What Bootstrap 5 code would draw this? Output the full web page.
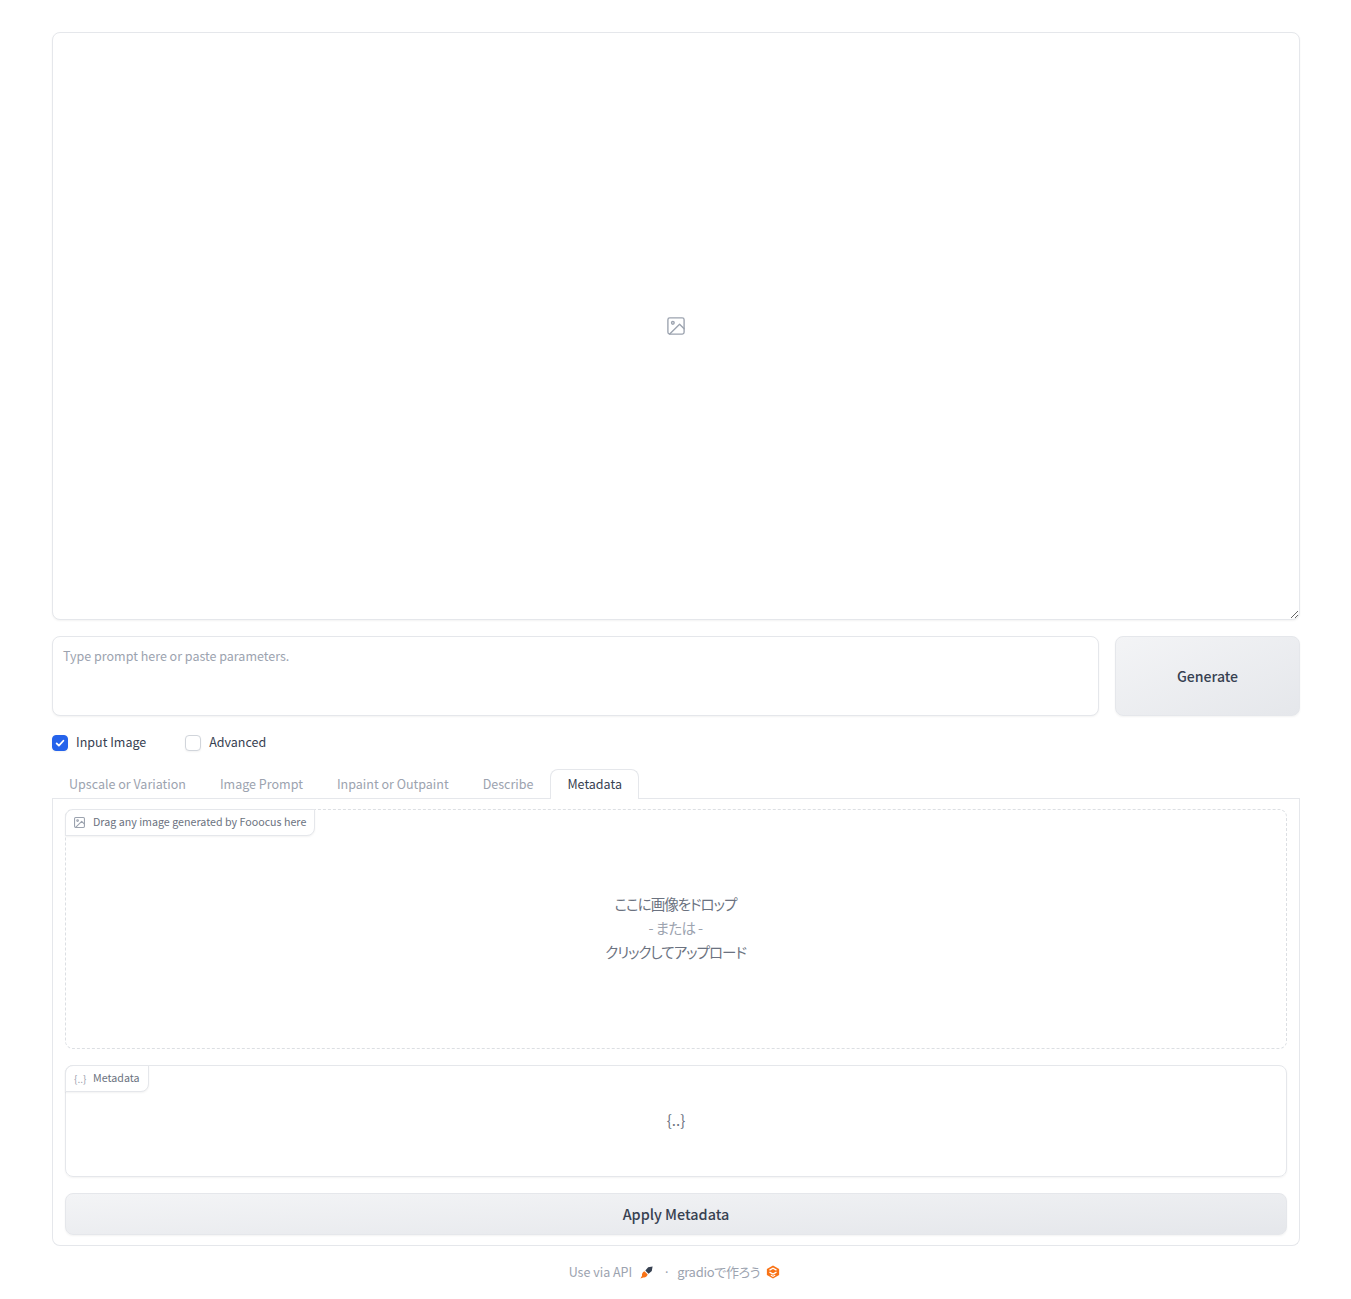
<!doctype html>
<html lang="ja">
<head>
<meta charset="utf-8">
<title>Fooocus</title>
<link href="https://cdn.jsdelivr.net/npm/bootstrap@5.3.0/dist/css/bootstrap.min.css" rel="stylesheet">
<style>
body{font-family:"Noto Sans CJK JP","Noto Sans",sans-serif;color:#374151;background:#fff;font-size:12.5px;line-height:1.5;font-feature-settings:"palt"}
.app-wrap{padding:32px 51px 0 52px}
.block-box{border:1px solid #e5e7eb;border-radius:8px;box-shadow:0 1px 2px rgba(0,0,0,.05);background:#fff}
.gallery-box{height:588px;resize:vertical;overflow:auto;color:#9ca3af}
.prompt-row{margin-top:16px;gap:16px;height:80px}
.prompt-area{padding:8px 10px;color:#9ca3af;line-height:21px}
.gen-btn{width:185px;border:1px solid #e5e7eb;border-radius:8px;background:linear-gradient(to bottom right,#f3f4f6,#e5e7eb);font-weight:500;font-size:14.1px;color:#374151;box-shadow:0 1px 2px rgba(0,0,0,.05);padding:2px 0 0}
.check-row{margin-top:19px;height:16px;gap:39px}
.check-item{gap:8px;line-height:16px;color:#374151}
.check-label{position:relative;top:-1px}
.check-box{width:16px;height:16px;border-radius:4px;border:1px solid #d1d5db;background:#fff;box-shadow:0 1px 2px rgba(0,0,0,.05)}
.check-box.is-on{background:#2563eb;border-color:#2563eb}
.tab-strip{margin-top:18px;height:30px;border-bottom:1px solid #e5e7eb;padding:0;font-size:12.52px}
.tab-item{padding:0 16px;height:30px;line-height:27px;color:#9ca3af;border:1px solid transparent;border-bottom:0;border-radius:8px 8px 0 0}
.tab-item.is-sel{color:#374151;border-color:#e5e7eb;background:#fff}
.tab-body{border:1px solid #e5e7eb;border-top:0;border-radius:0 0 8px 8px;padding:10px 12px;height:447px;gap:16px}
.drop-box{height:240px;padding:0 1px 2px 0;border:1px dashed #dcdfe3;border-radius:8px;position:relative;line-height:24px;font-size:14.5px;color:#6b7280}
.jp-tight{letter-spacing:-1px}
.drop-or{color:#9ca3af;letter-spacing:-.6px}
.json-box{height:112px;padding-bottom:2px;border:1px solid #e5e7eb;border-radius:8px;position:relative;font-size:15px;color:#6b7280;box-shadow:0 1px 2px rgba(0,0,0,.05)}
.corner-label{position:absolute;top:-1px;left:-1px;height:27px;display:flex;align-items:center;gap:8px;padding:0 8px;font-size:10.7px;color:#6b7280;background:#fff;border:1px solid #e5e7eb;border-radius:8px 0 8px 0;box-shadow:0 1px 2px rgba(0,0,0,.05);line-height:1}
.corner-ico{color:#9ca3af}
.corner-label .mini{font-size:10px;color:#9ca3af;width:11px;text-align:center}
.apply-btn{height:42px;border:1px solid #e5e7eb;border-radius:8px;background:linear-gradient(to bottom right,#f3f4f6,#e5e7eb);font-weight:500;font-size:14.4px;color:#374151;box-shadow:0 1px 2px rgba(0,0,0,.05);padding:0;width:100%}
.foot-line{height:53px;gap:8px;padding-right:3px;color:#9ca3af}
.foot-dot{margin:0 -1px 0 2px}
.foot-name{font-size:13px;letter-spacing:-.3px;margin:-2px -2px 0 0}
.foot-logo{margin-top:-2px}
</style>
</head>
<body class="m-0">
<div class="app-wrap">
  <div class="block-box gallery-box d-flex align-items-center justify-content-center">
    <svg width="18" height="18" viewBox="2 2 20 20" fill="none" stroke="currentColor" stroke-width="1.5" stroke-linecap="round" stroke-linejoin="round"><rect x="3" y="3" width="18" height="18" rx="2"/><circle cx="8.5" cy="8.5" r="1.5"/><path d="M21 15l-5-5L5 21"/></svg>
  </div>
  <div class="d-flex prompt-row">
    <div class="block-box prompt-area flex-grow-1">Type prompt here or paste parameters.</div>
    <button class="gen-btn flex-shrink-0" type="button">Generate</button>
  </div>
  <div class="d-flex check-row">
    <div class="d-flex align-items-center check-item">
      <span class="check-box is-on d-flex align-items-center justify-content-center"><svg width="12" height="12" viewBox="0 0 16 16" fill="none" stroke="#fff" stroke-width="2.4" stroke-linecap="round" stroke-linejoin="round"><path d="M3.5 8.5l3 3 6-6.5"/></svg></span>
      <span class="check-label">Input Image</span>
    </div>
    <div class="d-flex align-items-center check-item">
      <span class="check-box"></span>
      <span class="check-label">Advanced</span>
    </div>
  </div>
  <div class="d-flex tab-strip">
    <div class="tab-item">Upscale or Variation</div>
    <div class="tab-item">Image Prompt</div>
    <div class="tab-item">Inpaint or Outpaint</div>
    <div class="tab-item">Describe</div>
    <div class="tab-item is-sel">Metadata</div>
  </div>
  <div class="tab-body d-flex flex-column">
    <div class="drop-box d-flex flex-column align-items-center justify-content-center">
      <div class="corner-label">
        <svg class="corner-ico" width="11" height="11" viewBox="2 2 20 20" fill="none" stroke="currentColor" stroke-width="2" stroke-linecap="round" stroke-linejoin="round"><rect x="3" y="3" width="18" height="18" rx="2"/><circle cx="8.5" cy="8.5" r="1.5"/><path d="M21 15l-5-5L5 21"/></svg>
        <span>Drag any image generated by Fooocus here</span>
      </div>
      <div class="jp-tight">ここに画像をドロップ</div>
      <div class="drop-or">- または -</div>
      <div class="jp-tight">クリックしてアップロード</div>
    </div>
    <div class="json-box d-flex align-items-center justify-content-center">
      <div class="corner-label"><span class="mini">{..}</span><span>Metadata</span></div>
      <span>{..}</span>
    </div>
    <button class="apply-btn" type="button">Apply Metadata</button>
  </div>
  <div class="d-flex align-items-center justify-content-center foot-line">
    <span>Use via API</span>
    <svg width="13" height="13" viewBox="0 0 16 16"><path d="M15.5.5L10 1.5 6.5 5.5l4 4L14.500 6z" fill="#374151"/><path d="M5.500 6.500C3 7.500 2 10 2.500 12L.5 15.500l3.500-1.500c2 .5 4.500-.5 5.500-3.500z" fill="#f97316"/></svg>
    <span class="foot-dot">·</span>
    <span class="foot-name">gradioで作ろう</span>
    <svg class="foot-logo" width="14" height="14" viewBox="0 0 16 16"><path d="M8 .5L15 4.500v7L8 15.500 1 11.500v-7z" fill="#f97316"/><path d="M4 5.800L8 3.600l4 2.200M4 8.200L8 10.400l4-2.200" fill="none" stroke="#fff" stroke-width="1.500"/><path d="M5.500 11.500L8 13l2.500-1.500" fill="none" stroke="#fff" stroke-width="1.200"/></svg>
  </div>
</div>
</body>
</html>
